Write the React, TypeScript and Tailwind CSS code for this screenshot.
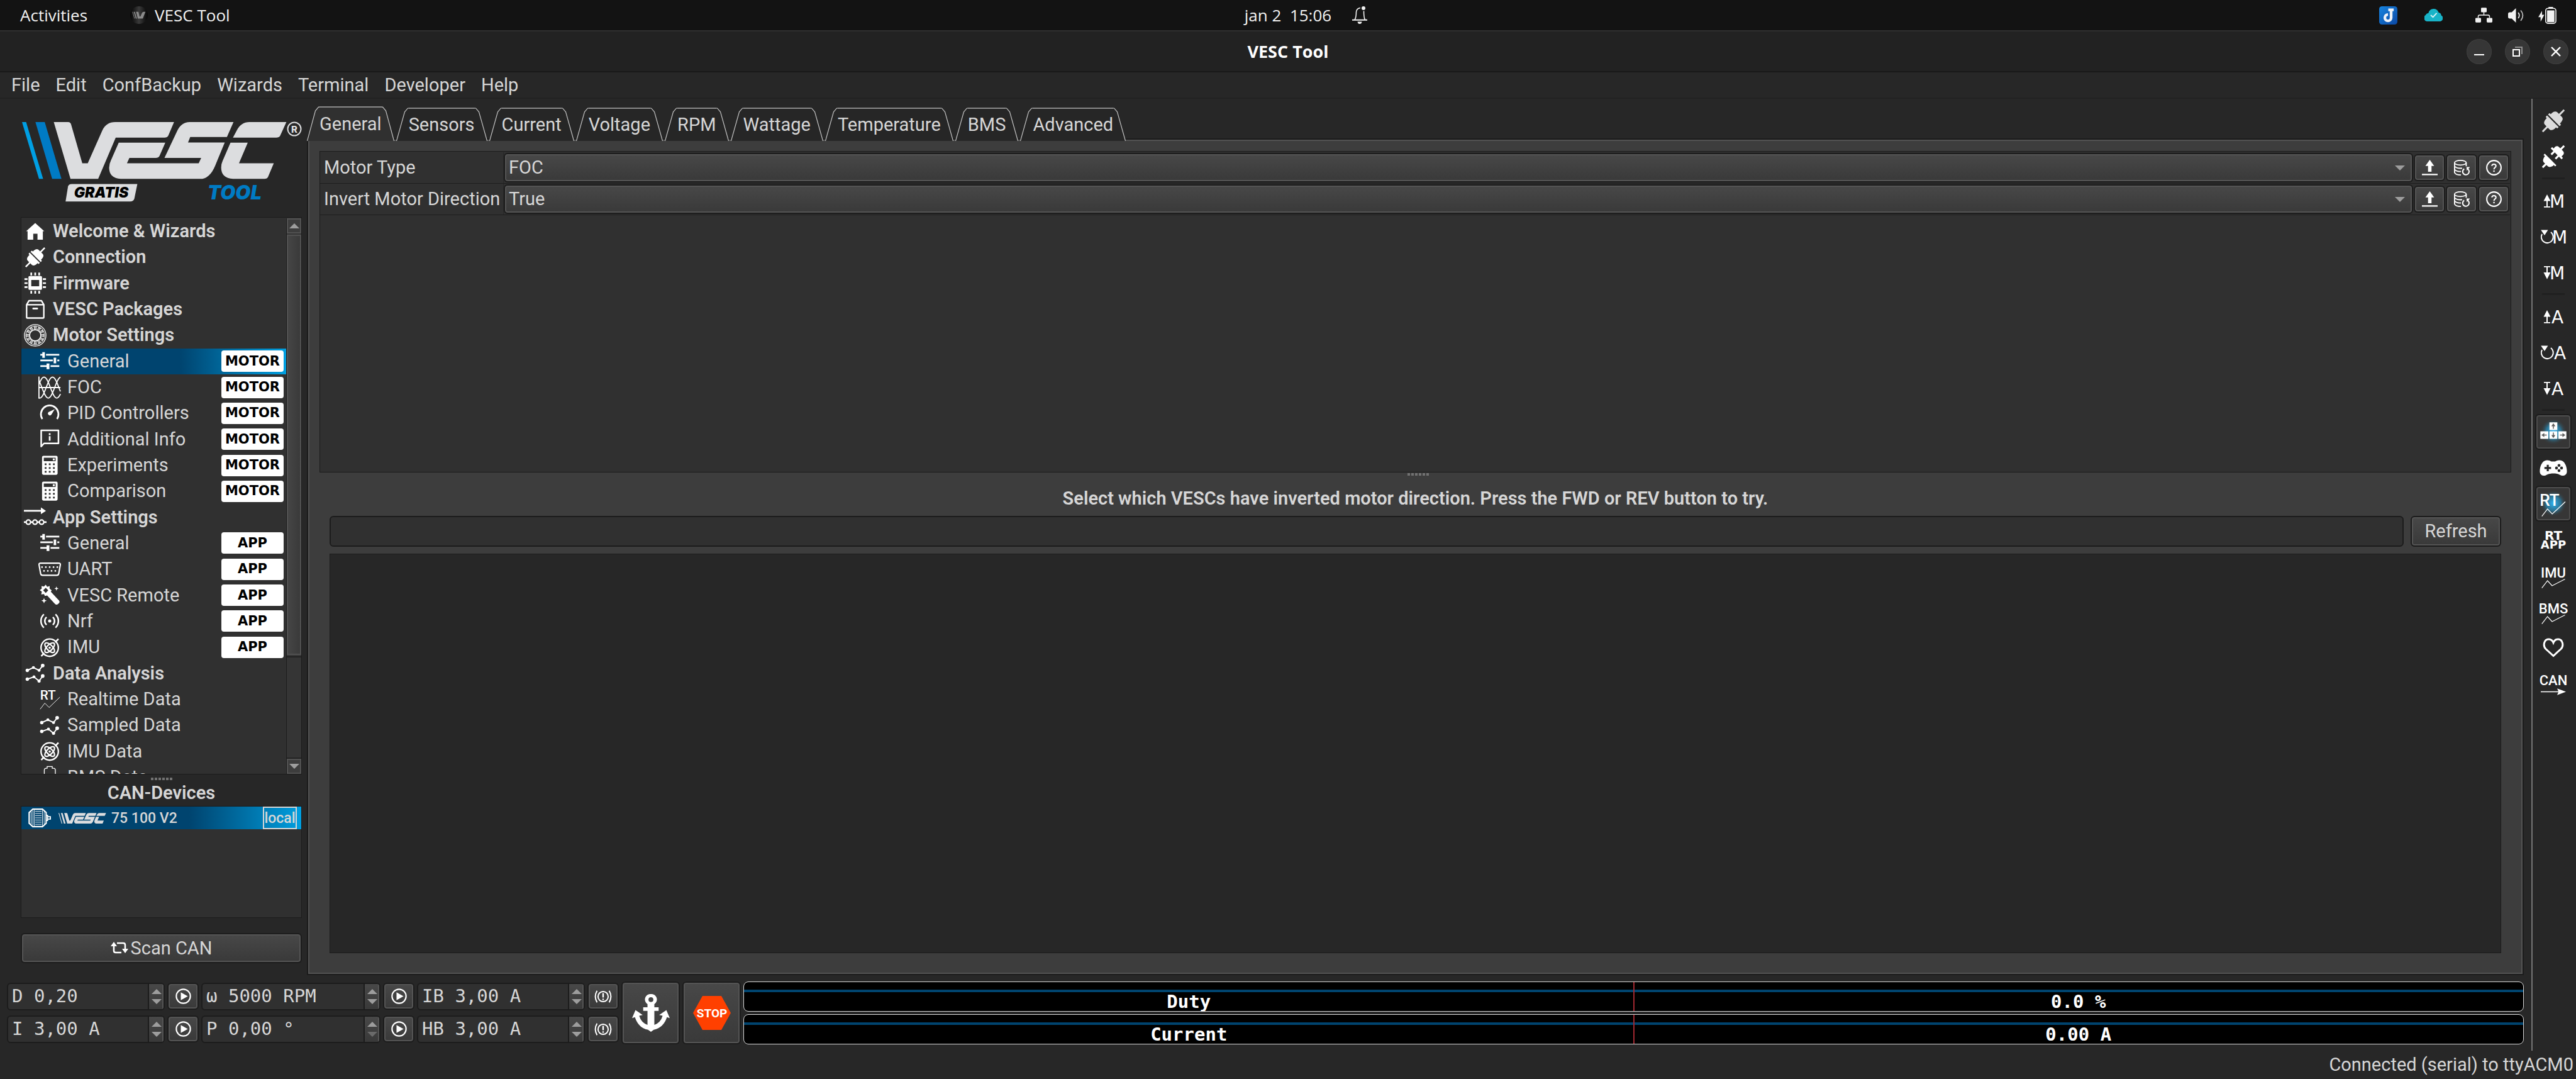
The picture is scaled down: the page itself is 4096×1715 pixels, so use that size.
import React from "react";

const WAVES = [0, 15, 30].map((phase) => {
  const points: string[] = [];
  for (let x = 1; x <= 39; x += 1) {
    const y = 20 - 18.5 * Math.cos(((x - 10 - phase) * 2 * Math.PI) / 45);
    points.push(`${x},${y.toFixed(1)}`);
  }
  return points.join(" ");
});

function Glyph({ children }: { children: React.ReactNode }) {
  return (
    <svg viewBox="0 0 40 40" className="size-9 shrink-0" fill="none" stroke="none" aria-hidden="true">
      {children}
    </svg>
  );
}

const HomeIcon = () => (
  <Glyph>
    <path fill="#fff" d="M20 5 36 19.5H33.5V34.5H24V24H16.5V34.5H6.5V19.5H4Z" />
  </Glyph>
);

const PlugShape = () => (
  <g transform="rotate(-45)">
    <path d="M1.2-14.5H4Q5-14.5 5-11.5H8Q15-11 15.5-6V-1.6H27V1.6H15.5V6Q15 11 8 11.5H5Q5 14.5 4 14.5H1.2Z" />
    <path d="M-1.2-14.5H-4Q-5-14.5-5-11.5H-8Q-15-11-15.5-6V-1.6H-27V1.6H-15.5V6Q-15 11-8 11.5H-5Q-5 14.5-4 14.5H-1.2Z" />
  </g>
);

const PlugIcon = () => (
  <Glyph>
    <g fill="#fff" transform="translate(20 20) scale(.88)">
      <PlugShape />
    </g>
  </Glyph>
);

const ChipIcon = () => (
  <Glyph>
    <path
      fill="#fff"
      fillRule="evenodd"
      d="M10 7.5H30Q32 7.5 32 9.5V30Q32 32 30 32H10Q8 32 8 30V9.5Q8 7.5 10 7.5ZM13 14.5V25.5H27V14.5Z"
    />
    <path
      fill="#fff"
      d="M11.5 1.5h3v5h-3zM18.5 1.5h3v5h-3zM25.5 1.5h3v5h-3zM11.5 33.5h3v5h-3zM18.5 33.5h3v5h-3zM25.5 33.5h3v5h-3zM1 11.5h5.5v3H1zM1 18.5h5.5v3H1zM1 25.5h5.5v3H1zM33.5 11.5H39v3h-5.500zM33.5 18.5H39v3h-5.500zM33.5 25.5H39v3h-5.500z"
    />
  </Glyph>
);

const PackageIcon = () => (
  <Glyph>
    <path
      stroke="#fff"
      strokeWidth="2.6"
      strokeLinejoin="round"
      d="M4.800 11.500 9 4.400H31L35.200 11.500V33.500Q35.200 35 33.500 35H6.500Q4.800 35 4.800 33.500ZM4.800 11.500H35.200"
    />
    <path stroke="#fff" strokeWidth="3" strokeLinecap="round" d="M16.500 18.300h7" />
  </Glyph>
);

const StatorIcon = () => (
  <Glyph>
    <g stroke="#fff">
      <circle cx="20" cy="20" r="19" strokeWidth="1.4" />
      <circle cx="20" cy="20" r="16.800" strokeWidth=".8" />
      <circle cx="20" cy="20" r="9.800" strokeWidth="1.600" />
      {[0, 30, 60, 90, 120, 150, 180, 210, 240, 270, 300, 330].map((a) => (
        <path key={a} strokeWidth="1" transform={`rotate(${a} 20 20)`} d="M18.300 10V4.500M20 10V4.500M21.700 10V4.500M17 4.500h6" />
      ))}
    </g>
  </Glyph>
);

const SlidersIcon = () => (
  <Glyph>
    <path
      fill="#fff"
      d="M3.500 7.200H7V4.300h4.500v10H7V10.300H3.500zM13.500 7.200H37v3.100H13.500zM3.500 17.200H25.500v3.100H3.500zM27 13.800h4.500v10H27zM33.500 17.200H37v3.100H33.500zM3.500 27.200h11v-3H19.500v10h-5v-4H3.500zM21.500 27.200H37v3.100H21.500z"
    />
  </Glyph>
);

const WaveIcon = () => (
  <Glyph>
    <g stroke="#fff" strokeWidth="2">
      <path d="M1 .5V39.500M1 20H39" />
      {WAVES.map((p) => (
        <polyline key={p} points={p} />
      ))}
    </g>
  </Glyph>
);

const GaugeIcon = () => (
  <Glyph>
    <path stroke="#fff" strokeWidth="3" d="M7 30A15.500 15.500 0 1 1 33 30" />
    <path fill="#fff" d="M29 12.500 22.800 22.600A3.300 3.300 0 1 1 18 17.800Z" />
  </Glyph>
);

const BubbleIcon = () => (
  <Glyph>
    <path stroke="#fff" strokeWidth="2.800" strokeLinejoin="round" d="M5 33V4.500H35.500V27.500H10Z" />
    <path fill="#fff" d="M18.500 9.500h3v3.200h-3zM18.500 14.800h3v8h-3z" />
  </Glyph>
);

const CalculatorIcon = () => (
  <Glyph>
    <path
      fill="#fff"
      fillRule="evenodd"
      d="M9 2.700H31.500Q34 2.700 34 5V34Q34 36.300 31.500 36.300H9Q6.500 36.300 6.500 34V5Q6.500 2.700 9 2.700ZM9.600 6V12.300H30.500V6ZM11.200 16.200v3h3.200v-3zM18.500 16.200v3h3.200v-3zM25.800 16.200v3H29v-3zM11.200 22.800v3h3.200v-3zM18.500 22.800v3h3.200v-3zM25.800 22.800v3H29v-3zM11.200 29.400v3h3.200v-3zM18.500 29.400v3h3.200v-3zM25.800 29.400v3H29v-3z"
    />
    <path fill="#fff" d="M25.500 7.500H29v3.300h-3.500z" />
  </Glyph>
);

const NodesIcon = () => (
  <Glyph>
    <path fill="#fff" d="M0 7.300H30V2.800L39 8.800 30 14.800V10.300H0zM0 27.300H4v3H0zM11.500 27.300h4v3h-4zM23.500 27.300h4v3h-4zM35 27.300h5v3h-5z" />
    <g stroke="#fff" strokeWidth="2.400">
      <circle cx="7.900" cy="28.800" r="3.900" />
      <circle cx="19.600" cy="28.800" r="3.900" />
      <circle cx="31.300" cy="28.800" r="3.900" />
    </g>
  </Glyph>
);

const SerialPortIcon = () => (
  <Glyph>
    <path
      stroke="#fff"
      strokeWidth="2.400"
      d="M4 9H36Q39.300 9 38.800 12L36 27.500Q35.400 30.500 32.500 30.500H7.500Q4.600 30.500 4 27.500L1.200 12Q.7 9 4 9Z"
    />
    <g fill="#fff">
      {[6.5, 13.2, 20, 26.8, 33.5].map((x) => (
        <circle key={x} cx={x} cy="16" r="1.500" />
      ))}
      {[10, 16.7, 23.3, 30].map((x) => (
        <circle key={x} cx={x} cy="22.700" r="1.500" />
      ))}
    </g>
  </Glyph>
);

const WandIcon = () => (
  <Glyph>
    <path
      fill="#fff"
      fillRule="evenodd"
      d="M13 1.500 15.500 5.200 20 3.800 19.800 8.300 23.500 11.500 22 14 36.500 29.500Q38.500 32 36 34.500L34 36Q31.500 37.500 29.500 35.500L15.500 20.500 11.500 21.500 10 18 5 18.500 6.200 14 2.500 11 6 8.300 5.500 4 10 4.800ZM13 7 8.500 11.500 13 16 17.500 11.500Z"
    />
    <path fill="#fff" d="m32 4.500 1 2.800 2.800 1-2.800 1-1 2.800-1-2.800-2.800-1 2.800-1zM10 25l1.300 3.400 3.400 1.300-3.400 1.300L10 34.500 8.700 31 5.300 29.700l3.400-1.300z" />
  </Glyph>
);

const RadioIcon = () => (
  <Glyph>
    <circle cx="20" cy="20" r="2.800" fill="#fff" />
    <g stroke="#fff" strokeWidth="2.800">
      <path d="M14.500 13.200A9 9 0 0 0 14.500 26.800M25.500 13.200A9 9 0 0 1 25.500 26.800M9.800 8.200A16 16 0 0 0 9.800 31.800M30.200 8.200A16 16 0 0 1 30.200 31.800" />
    </g>
  </Glyph>
);

const GyroIcon = () => (
  <Glyph>
    <g stroke="#fff">
      <circle cx="20" cy="20.500" r="15.300" strokeWidth="2.600" />
      <ellipse cx="20" cy="20.500" rx="11" ry="5" strokeWidth="2.400" transform="rotate(45 20 20.500)" />
      <ellipse cx="20" cy="20.500" rx="11" ry="5" strokeWidth="2.400" transform="rotate(-45 20 20.500)" />
      <path strokeWidth="2.800" d="M5 35.500 10.500 30M29.500 11 35.500 5" />
    </g>
    <circle cx="20" cy="20.500" r="2" fill="#fff" />
  </Glyph>
);

const SeriesIcon = () => (
  <Glyph>
    <g stroke="#fff" strokeWidth="2.200">
      <path d="M6 15 16.800 10 26.800 15 33.200 6.500M6 30.500 17.800 26.500 26.800 34 33.200 25" />
    </g>
    <g fill="#fff">
      <circle cx="6" cy="15" r="3" />
      <circle cx="16.800" cy="10" r="2.600" />
      <circle cx="26.800" cy="15" r="2.600" />
      <circle cx="33.200" cy="6.500" r="3.200" />
      <circle cx="6" cy="30.500" r="3" />
      <circle cx="17.800" cy="26.500" r="2.600" />
      <circle cx="26.800" cy="34" r="2.800" />
      <circle cx="33.200" cy="25" r="3.200" />
    </g>
  </Glyph>
);

const RealtimeIcon = () => (
  <Glyph>
    <text x="3" y="21" fill="#fff" fontSize="23" fontWeight="500" fontFamily="Roboto, sans-serif">
      RT
    </text>
    <path stroke="#fff" strokeWidth="1" d="M3.200 38 11.400 27.300 19 35 38 16.700" />
  </Glyph>
);

const BatteryIcon = () => (
  <Glyph>
    <path stroke="#fff" strokeWidth="1.500" d="M10.500 40V8Q10.500 4.500 13.500 4.500H15.500V1.500H24.500V4.500H27Q30 4.500 30 8V40" />
  </Glyph>
);

const MotorIcon = () => (
  <Glyph>
    <path stroke="#fff" strokeWidth="2.400" d="M8 4.500H25L31.500 10.500V29.500L25 35.500H8L1.500 29.500V10.500Z" />
    <path stroke="#fff" strokeWidth="1" d="M5 9V31M8 7V33M10.500 6V34M25 6V34M28 9V31M12 8.500H23.500M12 12.300H23.500M12 16.100H23.500M12 19.900H23.500M12 23.700H23.500M12 27.500H23.500M12 31.300H23.500" />
    <path stroke="#fff" strokeWidth="2" d="M32 15.500H34V24.500H32M34 18H39V22H34" />
  </Glyph>
);

function VescMark({ light, blue }: { light: string; blue: string }) {
  return (
    <>
      <path fill={light} d="M80 648H95L157 950H142Z" />
      <path fill={blue} d="M129 648H163L224 950H190Z" />
      <g fill="#dcdddf">
        <path d="M196 648H248Q258 648 260 665L300 867H320L374 690Q388 648 420 648H635L614 720Q610 731 600 731H422L358 950H257Z" />
        <path d="M433 758H603L582 828Q578 839 568 839H472L463 867H725L734 839H600L645 700Q660 648 692 648H852L828 728H694L686 757H820L785 880Q765 950 730 950H440Q398 945 398 890Q398 870 405 850Z" />
        <path d="M850 731 865 690Q880 648 910 648H1045L1022 722Q1018 731 1008 731Z" />
        <path d="M841 758H904L872 867H999L978 940Q975 950 965 950H850Q807 945 807 890Q807 870 812 855Z" />
      </g>
    </>
  );
}

function Logo() {
  return (
    <svg viewBox="0 0 446 132" className="ml-0.5 h-[132px] w-[446px] shrink-0" role="img" aria-label="VESC Tool Gratis">
      <g transform="scale(.4356 .2995) translate(-80 -645)">
        <VescMark light="#009fe3" blue="#007bc4" />
        <path fill="#dcdddf" d="M262 977H501L490 1055Q487 1070 475 1070H239L248 990Q250 977 262 977Z" />
      </g>
      <circle cx="433" cy="12" r="10.500" fill="none" stroke="#dcdddf" strokeWidth="2" />
      <text x="433" y="17.500" textAnchor="middle" fill="#dcdddf" fontSize="15" fontWeight="800" fontFamily="Inter, sans-serif">
        R
      </text>
      <text x="126" y="121" textAnchor="middle" fill="#000" fontSize="23" fontWeight="900" fontStyle="italic" fontFamily="Inter, sans-serif">
        GRATIS
      </text>
      <text x="338" y="124" textAnchor="middle" fill="#007bc4" fontSize="31" fontWeight="900" fontStyle="italic" fontFamily="Inter, sans-serif">
        TOOL
      </text>
    </svg>
  );
}

type TreeItem = { label: string; icon: React.ReactNode; sub?: boolean; badge?: string; active?: boolean };

const TREE: TreeItem[] = [
  { label: "Welcome & Wizards", icon: <HomeIcon /> },
  { label: "Connection", icon: <PlugIcon /> },
  { label: "Firmware", icon: <ChipIcon /> },
  { label: "VESC Packages", icon: <PackageIcon /> },
  { label: "Motor Settings", icon: <StatorIcon /> },
  { label: "General", icon: <SlidersIcon />, sub: true, badge: "MOTOR", active: true },
  { label: "FOC", icon: <WaveIcon />, sub: true, badge: "MOTOR" },
  { label: "PID Controllers", icon: <GaugeIcon />, sub: true, badge: "MOTOR" },
  { label: "Additional Info", icon: <BubbleIcon />, sub: true, badge: "MOTOR" },
  { label: "Experiments", icon: <CalculatorIcon />, sub: true, badge: "MOTOR" },
  { label: "Comparison", icon: <CalculatorIcon />, sub: true, badge: "MOTOR" },
  { label: "App Settings", icon: <NodesIcon /> },
  { label: "General", icon: <SlidersIcon />, sub: true, badge: "APP" },
  { label: "UART", icon: <SerialPortIcon />, sub: true, badge: "APP" },
  { label: "VESC Remote", icon: <WandIcon />, sub: true, badge: "APP" },
  { label: "Nrf", icon: <RadioIcon />, sub: true, badge: "APP" },
  { label: "IMU", icon: <GyroIcon />, sub: true, badge: "APP" },
  { label: "Data Analysis", icon: <SeriesIcon /> },
  { label: "Realtime Data", icon: <RealtimeIcon />, sub: true },
  { label: "Sampled Data", icon: <SeriesIcon />, sub: true },
  { label: "IMU Data", icon: <GyroIcon />, sub: true },
  { label: "BMS Data", icon: <BatteryIcon />, sub: true },
];

const raised =
  "border-2 border-[#1c1c1c] bg-linear-to-b from-[#484848] to-[#393939] shadow-[inset_0_0_0_2px_#545454]";

function Triangle({ up, dim }: { up?: boolean; dim?: boolean }) {
  return (
    <svg viewBox="0 0 16 8" className="h-2 w-4" aria-hidden="true">
      <path d={up ? "M8 0 16 8H0Z" : "M0 0H16L8 8Z"} fill={dim ? "#6a6a6a" : "#9d9d9d"} />
    </svg>
  );
}

function SplitDots() {
  return (
    <div className="flex h-3.5 items-center justify-center gap-0.5" aria-hidden="true">
      {[0, 1, 2, 3, 4, 5].map((i) => (
        <span key={i} className="size-1 bg-[#727272]" />
      ))}
    </div>
  );
}

function TreeRow({ item }: { item: TreeItem }) {
  const pad = item.sub ? "pl-[27px]" : "pl-1 font-semibold";
  const fill = item.active ? "bg-linear-to-r from-[#00446f] from-60% to-[#009fe0]" : "";
  return (
    <li className={`flex ${fill}`}>
      <button type="button" className={`flex min-w-0 flex-1 items-center gap-2.5 pr-1 text-left ${pad}`}>
        {item.icon}
        <span className="flex-1 whitespace-nowrap">{item.label}</span>
        {item.badge && (
          <span className="flex h-[34px] w-[99px] items-center justify-center rounded bg-white font-['DejaVu_Sans',sans-serif] text-[21px] leading-none font-bold text-black">
            {item.badge}
          </span>
        )}
      </button>
    </li>
  );
}

function Sidebar() {
  return (
    <aside className="flex w-[447px] shrink-0 flex-col pt-9 pb-[19px]">
      <Logo />
      <nav className="mt-5 flex min-h-0 flex-1 overflow-hidden border border-[#1c1c1c] bg-[#303030] pt-px">
        <ul className="grid h-[909px] flex-1 auto-rows-fr">
          {TREE.map((item, i) => (
            <TreeRow key={i} item={item} />
          ))}
        </ul>
        <div className="flex w-6 flex-col border-l border-[#1c1c1c] bg-[#353535]">
          <button type="button" aria-label="Scroll up" className="flex h-6 items-center justify-center border-2 border-[#515151] bg-[#3d3d3d]">
            <Triangle up />
          </button>
          <div className="my-0.5 grow-[674] border-2 border-[#515151] bg-linear-to-r from-[#454545] to-[#3a3a3a]" />
          <div className="grow-[162] border-t-2 border-b-2 border-[#222]" />
          <button type="button" aria-label="Scroll down" className="flex h-6 items-center justify-center border-2 border-[#515151] bg-[#3d3d3d]">
            <Triangle />
          </button>
        </div>
      </nav>
      <SplitDots />
      <h2 className="h-9 text-center leading-[30px] font-semibold">CAN-Devices</h2>
      <div className="h-[178px] border border-[#1c1c1c] bg-[#303030]">
        <div className="flex h-9 items-center bg-linear-to-r from-[#00446f] from-60% to-[#009fe0] pl-[11px] text-[23px] font-medium">
          <MotorIcon />
          <svg viewBox="80 645 970 305" preserveAspectRatio="none" className="ml-3 h-[17px] w-[76px]" role="img" aria-label="VESC">
            <VescMark light="#dcdddf" blue="#dcdddf" />
          </svg>
          <span className="ml-2 leading-none">75 100 V2</span>
          <span className="mr-[7px] ml-auto flex h-9 w-[54px] items-center justify-center border-2 border-[#d6d6d6] leading-none">local</span>
        </div>
      </div>
      <button type="button" className={`mt-6 flex h-12 items-center justify-center gap-1 rounded-md ${raised}`}>
        <svg viewBox="0 0 28 22" className="h-[22px] w-7" aria-hidden="true">
          <path fill="none" stroke="#fff" strokeWidth="2.600" d="M5 7V15Q5 18 8 18H17M10 3H20Q23 3 23 6V13" />
          <path fill="#fff" d="M5 1 10 8H0ZM23 19 18 12H28Z" />
        </svg>
        Scan CAN
      </button>
    </aside>
  );
}

const TABS = ["General", "Sensors", "Current", "Voltage", "RPM", "Wattage", "Temperature", "BMS", "Advanced"];

function TabEdge({ fill, flip }: { fill: string; flip?: boolean }) {
  return (
    <svg viewBox="0 0 20 54" preserveAspectRatio="none" className={`h-full w-5 ${flip ? "-scale-x-100" : ""}`} aria-hidden="true">
      <path d="M0 54 14 7 19 1H20V54Z" fill={fill} />
      <path d="M.5 54 13.500 7 18.500 1H20" fill="none" stroke="#c2c2c2" strokeWidth="1.200" />
    </svg>
  );
}

function Tabs() {
  return (
    <div role="tablist" className="relative z-10 -mb-1 flex items-end gap-[3px] pt-3">
      {TABS.map((t, i) => {
        const on = i === 0;
        const fill = on ? "#303030" : "#262626";
        return (
          <button key={t} type="button" role="tab" aria-selected={on} className={`flex ${on ? "h-[55px]" : "h-[53px]"}`}>
            <TabEdge fill={fill} />
            <span className={`flex h-full items-center border-t-2 border-[#8a8a8a] ${on ? "bg-[#303030]" : "bg-[#262626]"}`}>{t}</span>
            <TabEdge fill={fill} flip />
          </button>
        );
      })}
    </div>
  );
}

const UploadIcon = () => (
  <svg viewBox="0 0 27 27" className="size-[25px]" aria-hidden="true">
    <path fill="#fff" d="M13.500 0 21 10.500H16.500V20.500H10.500V10.500H6ZM0 24H27V26.500H0Z" />
  </svg>
);

const DatabaseIcon = () => (
  <svg viewBox="0 0 27 27" className="size-[25px]" fill="none" stroke="#fff" strokeWidth="2" aria-hidden="true">
    <ellipse cx="11" cy="5" rx="10" ry="4" />
    <path d="M1 5V22Q3 26 12 26M21 5V11M1 11Q4 15 14 14.500M1 16.500Q4 20.500 12 20" />
    <path strokeWidth="2.200" d="M17.500 15.500A5.500 5.500 0 1 0 24 16" />
    <path fill="#fff" stroke="none" d="M21.500 12.500H27.500L22 18.500Z" />
  </svg>
);

const HelpIcon = () => (
  <svg viewBox="0 0 27 27" className="size-[25px]" aria-hidden="true">
    <circle cx="13.500" cy="13.500" r="12.300" fill="none" stroke="#fff" strokeWidth="2.200" />
    <path fill="none" stroke="#fff" strokeWidth="2.200" d="M10 10.500Q10 7.500 13.500 7.500 17 7.500 17 10.500 17 12.200 15.200 13.300 13.600 14.300 13.600 16.500" />
    <circle cx="13.600" cy="19.500" r="1.400" fill="#fff" />
  </svg>
);

function ParamRow({ id, label, value }: { id: string; label: string; value: string }) {
  return (
    <div className="flex h-[50px] border-b border-[#1e1e1e]">
      <label htmlFor={id} className="flex w-[292px] items-center border-r border-[#272727] pl-1.5 whitespace-nowrap">
        {label}
      </label>
      <div className="relative flex flex-1 items-center">
        <select id={id} defaultValue={value} className={`h-[47px] w-full appearance-none rounded-md pl-1.5 ${raised}`}>
          <option>{value}</option>
        </select>
        <span className="pointer-events-none absolute right-[13px]">
          <Triangle />
        </span>
      </div>
      <div className="flex items-center gap-px pr-px pl-px">
        <button type="button" aria-label={`Read ${label}`} className={`flex h-[43px] w-[50px] items-center justify-center rounded-md ${raised}`}>
          <UploadIcon />
        </button>
        <button type="button" aria-label={`Default ${label}`} className={`flex h-[43px] w-[50px] items-center justify-center rounded-md ${raised}`}>
          <DatabaseIcon />
        </button>
        <button type="button" aria-label={`Help ${label}`} className={`flex h-[43px] w-[50px] items-center justify-center rounded-md ${raised}`}>
          <HelpIcon />
        </button>
      </div>
    </div>
  );
}

function MainPane() {
  return (
    <section className="flex min-w-0 flex-1 flex-col">
      <Tabs />
      <div className="flex flex-1 flex-col border-2 border-[#1c1c1c] bg-[#3d3d3d] px-[18px] pt-[18px] pb-[33px] shadow-[inset_0_0_0_2px_#525252]">
        <div className="h-[511px] border border-[#1c1c1c] bg-[#303030] pt-px pr-px">
          <ParamRow id="motor-type" label="Motor Type" value="FOC" />
          <ParamRow id="invert-direction" label="Invert Motor Direction" value="True" />
        </div>
        <div className="-mt-1 pl-2">
          <SplitDots />
        </div>
        <p className="mt-1.5 h-[53px] text-center leading-[50px] font-semibold">
          Select which VESCs have inverted motor direction. Press the FWD or REV button to try.
        </p>
        <div className="mx-4 flex h-[49px] gap-[11px]">
          <input aria-label="Progress" readOnly className="flex-1 rounded-md border-2 border-[#1c1c1c] bg-[#303030]" />
          <button type="button" className={`w-36 rounded-md ${raised}`}>
            Refresh
          </button>
        </div>
        <div className="mx-4 mt-[11px] flex-1 border border-[#1c1c1c] bg-[#272727]" />
      </div>
    </section>
  );
}

function Spin({ label, value, dimDown }: { label: string; value: string; dimDown?: boolean }) {
  return (
    <div className="flex h-11 w-full items-stretch overflow-hidden rounded-md border-2 border-[#1c1c1c] bg-[#303030]">
      <input
        aria-label={label}
        defaultValue={value}
        className="min-w-0 flex-1 bg-transparent pb-0.5 pl-1.5 font-['DejaVu_Sans_Mono',monospace] text-[29px] leading-none"
      />
      <div className="flex w-[25px] flex-col border-l-2 border-[#1c1c1c] bg-linear-to-b from-[#484848] to-[#393939] shadow-[inset_-2px_0_0_0_#545454]">
        <button type="button" aria-label={`${label} up`} className="flex flex-1 items-center justify-center pt-1">
          <Triangle up />
        </button>
        <button type="button" aria-label={`${label} down`} className="flex flex-1 items-center justify-center pb-1">
          <Triangle dim={dimDown} />
        </button>
      </div>
    </div>
  );
}

function SquareButton({ label, children }: { label: string; children: React.ReactNode }) {
  return (
    <button type="button" aria-label={label} className={`flex h-[43px] w-[50px] shrink-0 items-center justify-center self-start rounded-md ${raised}`}>
      {children}
    </button>
  );
}

const PlayIcon = () => (
  <svg viewBox="0 0 28 28" className="size-[25px]" aria-hidden="true">
    <circle cx="14" cy="14" r="12.500" fill="none" stroke="#fff" strokeWidth="2.400" />
    <path fill="#fff" d="M9.500 7 22 14 9.500 21Z" />
  </svg>
);

const BrakeIcon = () => (
  <svg viewBox="0 0 30 24" className="h-[22px] w-7" fill="none" stroke="#fff" strokeWidth="2.200" aria-hidden="true">
    <circle cx="15" cy="12" r="8.800" />
    <path d="M4.500 2Q-1.500 12 4.500 22M25.500 2Q31.500 12 25.500 22" />
    <path strokeWidth="2.600" d="M15 6V13.500M15 15.500V18" />
  </svg>
);

const BIG_BUTTON = "flex h-[100px] w-[93px] shrink-0 items-center justify-center rounded-md";

function Gauge({ name, value }: { name: string; value: string }) {
  return (
    <div className="relative flex min-h-0 flex-col overflow-hidden rounded-lg border border-[#d6d6d6] bg-black pt-3 font-['DejaVu_Sans_Mono',monospace] font-bold text-white">
      <div className="h-1 shrink-0 bg-[#00446f]" />
      <div className="grid min-h-0 flex-1 grid-cols-2 items-center text-center leading-none">
        <span>{name}</span>
        <span>{value}</span>
      </div>
      <div className="absolute inset-y-0 left-1/2 w-0.5 -translate-x-1/2 bg-[#a02830]" />
    </div>
  );
}

function Controls() {
  return (
    <footer className="mt-2.5 mb-2.5 flex h-[100px] gap-1 pr-3 pl-[11px]">
      <div className="grid shrink-0 grid-cols-[251px_50px_285px_50px_267px_50px] grid-rows-2 items-center gap-x-1 gap-y-2 py-0.5">
        <Spin label="Duty" value="D 0,20" />
        <SquareButton label="Run duty">
          <PlayIcon />
        </SquareButton>
        <Spin label="Speed" value="ω 5000 RPM" />
        <SquareButton label="Run speed">
          <PlayIcon />
        </SquareButton>
        <Spin label="Brake current" value="IB 3,00 A" />
        <SquareButton label="Brake">
          <BrakeIcon />
        </SquareButton>
        <Spin label="Current" value="I 3,00 A" />
        <SquareButton label="Run current">
          <PlayIcon />
        </SquareButton>
        <Spin label="Position" value="P 0,00 °" dimDown />
        <SquareButton label="Run position">
          <PlayIcon />
        </SquareButton>
        <Spin label="Handbrake current" value="HB 3,00 A" />
        <SquareButton label="Handbrake">
          <BrakeIcon />
        </SquareButton>
      </div>
      <button type="button" aria-label="Release motor" className={`${BIG_BUTTON} ${raised}`}>
        <svg viewBox="0 0 66 66" className="size-[60px]" aria-hidden="true">
          <path
            fill="#fff"
            fillRule="evenodd"
            d="M33 0A9.500 9.500 0 0 1 39 17.500V23H46.500V29.500H39V54Q50 50 53.500 38L47.500 36.500 60 28 66 42 61 40.500Q55 59 38 62.500L33 66 28 62.500Q11 59 5 40.500L0 42 6 28 18.500 36.500 12.500 38Q16 50 27 54V29.500H19.500V23H27V17.500A9.500 9.500 0 0 1 33 0ZM33 5.500A4 4 0 1 0 33 14 4 4 0 1 0 33 5.500Z"
          />
        </svg>
      </button>
      <button type="button" className={`${BIG_BUTTON} ${raised}`}>
        <svg viewBox="0 0 60 54" className="h-[54px] w-[60px]" role="img" aria-label="Stop">
          <path fill="#ff4000" d="M15 0H45L60 27 45 54H15L0 27Z" />
          <text x="30" y="34" textAnchor="middle" fill="#fff" fontSize="19" fontWeight="700" fontFamily="Roboto, sans-serif">
            STOP
          </text>
        </svg>
      </button>
      <div className="grid min-w-0 flex-1 grid-rows-2 gap-1">
        <Gauge name="Duty" value="0.0 %" />
        <Gauge name="Current" value="0.00 A" />
      </div>
    </footer>
  );
}

function ToolIcon({ children }: { children: React.ReactNode }) {
  return (
    <svg viewBox="0 0 48 48" className="size-12" fill="none" aria-hidden="true">
      {children}
    </svg>
  );
}

function Letter({ x, children }: { x: number; children: string }) {
  return (
    <text x={x} y="34.500" fill="#fff" fontSize="28" fontFamily="'DejaVu Sans', sans-serif">
      {children}
    </text>
  );
}

function UpIcon({ letter }: { letter: string }) {
  return (
    <ToolIcon>
      <path fill="#fff" d="M14 14 19.500 24.500H15V33H19V34.800H9V33H13V24.500H8.500Z" />
      <Letter x={letter === "M" ? 18 : 21}>{letter}</Letter>
    </ToolIcon>
  );
}

function DownIcon({ letter }: { letter: string }) {
  return (
    <ToolIcon>
      <path fill="#fff" d="M14 34.800 19.500 24H15V15.800H19V14H9V15.800H13V24H8.500Z" />
      <Letter x={letter === "M" ? 18 : 21}>{letter}</Letter>
    </ToolIcon>
  );
}

function CycleIcon({ letter }: { letter: string }) {
  return (
    <ToolIcon>
      <path stroke="#fff" strokeWidth="2" d="M20 17A9.500 9.500 0 1 1 6 20" />
      <path fill="#fff" d="M4.200 13.400H15.500L10 22Z" />
      <Letter x={letter === "M" ? 22 : 25}>{letter}</Letter>
    </ToolIcon>
  );
}

function Glow() {
  return (
    <>
      <defs>
        <radialGradient id="glow">
          <stop offset="0" stopColor="#2fb4f5" />
          <stop offset=".55" stopColor="#2a83ab" stopOpacity=".8" />
          <stop offset="1" stopColor="#383838" stopOpacity="0" />
        </radialGradient>
      </defs>
      <circle cx="24" cy="23" r="21" fill="url(#glow)" />
    </>
  );
}

function ChartText({ text, line }: { text: string; line: string }) {
  return (
    <>
      <text
        x={text === "RT" ? 18 : 24}
        y="27"
        textAnchor="middle"
        fill="#fff"
        fontSize={text === "RT" ? 26 : 22}
        fontWeight="500"
        fontFamily="Roboto, sans-serif"
      >
        {text}
      </text>
      <path stroke="#fff" strokeWidth="1.200" d={line} />
    </>
  );
}

type Tool = { label: string; icon: React.ReactNode; on?: boolean };

const TOOL_GROUPS: Tool[][] = [
  [
    {
      label: "Connect",
      icon: (
        <ToolIcon>
          <g fill="#dcdcdc" transform="translate(24 24) scale(.9)">
            <PlugShape />
          </g>
        </ToolIcon>
      ),
    },
    {
      label: "Disconnect",
      icon: (
        <ToolIcon>
          <g fill="#fff" transform="translate(24 24) scale(.9) rotate(-45)">
            <path d="M0-7H7V-13.500H10.500V-10H15Q19-9 19-5V-1.700H27V1.700H19V5Q19 9 15 10H10.500V13.500H7V7H0V3.500H7V-3.500H0Z" />
            <path d="M-7-14.500H-10V-11H-12Q-19-9-19-5V-1.700H-27V1.700H-19V5Q-19 9-12 11H-10V14.500H-7Z" />
          </g>
        </ToolIcon>
      ),
    },
  ],
  [
    { label: "Read motor configuration", icon: <UpIcon letter="M" /> },
    { label: "Read default motor configuration", icon: <CycleIcon letter="M" /> },
    { label: "Write motor configuration", icon: <DownIcon letter="M" /> },
  ],
  [
    { label: "Read app configuration", icon: <UpIcon letter="A" /> },
    { label: "Read default app configuration", icon: <CycleIcon letter="A" /> },
    { label: "Write app configuration", icon: <DownIcon letter="A" /> },
  ],
  [
    {
      label: "Keyboard control",
      on: true,
      icon: (
        <ToolIcon>
          <Glow />
          <path fill="#fff" d="M17.700 8.300H30.300V20.500H17.700zM3.300 22.400H16V34.600H3.300zM17.700 22.400H30.300V34.600H17.700zM32 22.400H44.700V34.600H32z" />
          <path
            stroke="#5c5c5c"
            strokeWidth="1.500"
            d="M24 18.500V12M13.500 28.500H8M24 24.500V31M34.500 28.500H40"
          />
          <path fill="#5c5c5c" d="M24 9.800 27.200 14.500H20.800zM5 28.500 9.500 25.300V31.700zM24 33.200 20.800 28.500H27.200zM43 28.500 38.500 25.300V31.700z" />
        </ToolIcon>
      ),
    },
    {
      label: "Gamepad control",
      icon: (
        <ToolIcon>
          <path
            fill="#fff"
            fillRule="evenodd"
            d="M14 11.500Q18 11.500 21 13.500H27Q30 11.500 34 11.500C42 11.500 46 22 45.500 30 45 35.500 40 37 36 35.500 31 32.500 27 32.500 24 32.500 21 32.500 17 32.500 12 35.500 8 37 3 35.500 2.500 30 2 22 6 11.500 14 11.500ZM13.500 18.800V22.300H9.800V25.500H13.500V29H16.700V25.500H20.400V22.300H16.700V18.800Z"
          />
          <g fill="#272727">
            <circle cx="33" cy="19.800" r="2.300" />
            <circle cx="33" cy="28" r="2.300" />
            <circle cx="29" cy="23.900" r="2.300" />
            <circle cx="37" cy="23.900" r="2.300" />
          </g>
        </ToolIcon>
      ),
    },
    {
      label: "Stream realtime data",
      on: true,
      icon: (
        <ToolIcon>
          <Glow />
          <ChartText text="RT" line="M5.700 43.600 14.700 32 22.200 40 43 20.500" />
        </ToolIcon>
      ),
    },
    {
      label: "Stream app data",
      icon: (
        <ToolIcon>
          <g fill="#fff" fontWeight="700" textAnchor="middle" fontFamily="'DejaVu Sans', sans-serif">
            <text x="24" y="23.500" fontSize="20">
              RT
            </text>
            <text x="24" y="37.500" fontSize="18">
              APP
            </text>
          </g>
        </ToolIcon>
      ),
    },
    {
      label: "Stream IMU data",
      icon: (
        <ToolIcon>
          <ChartText text="IMU" line="M5.700 43.600 14.700 32 22 40 42.500 29.500" />
        </ToolIcon>
      ),
    },
    {
      label: "Stream BMS data",
      icon: (
        <ToolIcon>
          <ChartText text="BMS" line="M5.700 43.600 14.700 32 22 40 42.500 29.500" />
        </ToolIcon>
      ),
    },
    {
      label: "Send alive",
      icon: (
        <ToolIcon>
          <path
            stroke="#fff"
            strokeWidth="3"
            d="M24 37.500 12 26.500C7 21.500 9 11 16.500 11 20.500 11 22.800 13.500 24 16.500 25.200 13.500 27.500 11 31.500 11 39 11 41 21.500 36 26.500Z"
          />
        </ToolIcon>
      ),
    },
    {
      label: "CAN forwarding",
      icon: (
        <ToolIcon>
          <text x="24" y="27" textAnchor="middle" fill="#fff" fontSize="22" fontWeight="500" fontFamily="Roboto, sans-serif">
            CAN
          </text>
          <path fill="#fff" d="M4 36.700H32L30 32.300 44 37.500 30 42.700 32 38.300H4Z" />
        </ToolIcon>
      ),
    },
  ],
];

function Toolbar() {
  return (
    <div role="toolbar" aria-orientation="vertical" className="flex w-[71px] shrink-0 flex-col items-center border-l-2 border-[#757575] pt-1.5 pr-[3px]">
      {TOOL_GROUPS.map((group, g) => (
        <React.Fragment key={g}>
          {g > 0 && <hr className="my-[5px] h-[3px] w-9 border-0 bg-[#202020]" />}
          {group.map((tool) => (
            <button
              key={tool.label}
              type="button"
              aria-label={tool.label}
              aria-pressed={tool.on}
              className={`flex h-[57px] w-[58px] items-center justify-center rounded-md ${
                tool.on ? "border-2 border-[#1c1c1c] bg-[#363636] shadow-[inset_0_0_0_2px_#4d4d4d]" : ""
              }`}
            >
              {tool.icon}
            </button>
          ))}
        </React.Fragment>
      ))}
    </div>
  );
}

function SystemBar() {
  return (
    <header className="grid h-[50px] grid-cols-3 items-center border-b-2 border-[#2f2f2f] bg-[#131313] font-['Open_Sans',sans-serif] text-[26px] text-[#f2f2f2]">
      <div className="flex items-center pl-8">
        <span>Activities</span>
        <svg viewBox="0 0 30 30" className="ml-[68px] size-[28px]" aria-hidden="true">
          <defs>
            <linearGradient id="app-disc">
              <stop offset="0" stopColor="#050505" />
              <stop offset=".5" stopColor="#3a3a3a" />
              <stop offset="1" stopColor="#050505" />
            </linearGradient>
          </defs>
          <circle cx="15" cy="15" r="15" fill="url(#app-disc)" />
          <path fill="#8a8a8a" d="M3.500 9.500h1L8 21H7zM6 9.500h2L11.500 21h-2zM10 9.500H14L16 17.500H17.500L20 11.500Q21 9.500 23 9.500H26L21.500 21H13Z" />
        </svg>
        <span className="ml-[11px]">VESC Tool</span>
      </div>
      <div className="relative flex items-center justify-center">
        <span className="whitespace-pre">jan 2  15:06</span>
        <svg viewBox="0 0 24 28" className="absolute left-1/2 ml-[102px] h-7 w-6" fill="none" aria-hidden="true">
          <path stroke="#f2f2f2" strokeWidth="1.600" d="M4 21.500Q6.500 18 6.500 9 7 3.500 13 2.500M18.500 7.500Q18.500 18 20.500 21.500" />
          <path fill="#f2f2f2" d="M0 20.800H24V22.800H0zM8.500 24.500H15.500Q15 28 12 28 9 28 8.500 24.500Z" />
          <circle cx="18" cy="3" r="3" fill="#f2f2f2" />
        </svg>
      </div>
      <div className="flex items-center justify-end pr-[31px]">
        <svg viewBox="0 0 32 32" className="size-[29px]" aria-hidden="true">
          <defs>
            <linearGradient id="notes" x1="0" y1="0" x2="1" y2="1">
              <stop offset="0" stopColor="#1785e0" />
              <stop offset="1" stopColor="#0b47a3" />
            </linearGradient>
          </defs>
          <rect width="32" height="32" rx="5" fill="url(#notes)" />
          <path fill="none" stroke="#eef2f8" strokeWidth="4.800" d="M16 6.200H25.500M21 5V20A5.500 5.500 0 1 1 15.500 14.500" />
        </svg>
        <svg viewBox="0 0 32 22" className="ml-[43px] h-5 w-[29px]" aria-hidden="true">
          <path fill="#18b3c7" d="M6 22A6 6 0 0 1 2 11Q3.500 8 7 7.500 9 0 16 0 22.500 0 25 6.500 29 7 29.500 11.500A5.600 5.600 0 0 1 27 22Z" />
          <path fill="none" stroke="#d6f3f6" strokeWidth="2" d="M11 11 15 14.500 21.500 7.500" />
        </svg>
        <svg viewBox="0 0 30 26" className="ml-[52px] h-6 w-[27px]" aria-hidden="true">
          <path fill="none" stroke="#f2f2f2" strokeWidth="1.600" d="M15 7V13M5 18V15.500Q5 13 7.500 13H22.500Q25 13 25 15.500V18" />
          <path fill="#f2f2f2" d="M11.500 0H18.500Q20 0 20 1.500V6.500Q20 8 18.500 8H11.500Q10 8 10 6.500V1.500Q10 0 11.500 0ZM1.500 18H8.500Q10 18 10 19.500V24.500Q10 26 8.500 26H1.500Q0 26 0 24.500V19.500Q0 18 1.500 18ZM21.500 18H28.500Q30 18 30 19.500V24.500Q30 26 28.500 26H21.500Q20 26 20 24.500V19.500Q20 18 21.500 18Z" />
        </svg>
        <svg viewBox="0 0 28 28" className="ml-[25px] size-[25px]" aria-hidden="true">
          <path fill="#f2f2f2" d="M3 8.500H6.500L14 1V27L6.500 19.500H3Q0 19.500 0 16.500V11.500Q0 8.500 3 8.500Z" />
          <path fill="none" stroke="#f2f2f2" strokeWidth="1.900" d="M18 9Q22 14 18 19" />
          <path fill="none" stroke="#bdbdbd" strokeWidth="1.900" d="M22.500 5Q30 14 22.500 23.500" />
        </svg>
        <svg viewBox="0 0 32 30" className="ml-[23px] h-[27px] w-[29px]" aria-hidden="true">
          <path fill="#f2f2f2" d="M6.500 7V14H10.500L4 26V18H0ZM18 0H26V3H18ZM15.500 6H28.500V27H15.500Z" />
          <rect x="13" y="2.500" width="18" height="26.500" rx="4" fill="none" stroke="#f2f2f2" strokeWidth="1.800" />
        </svg>
      </div>
    </header>
  );
}

function TitleBar() {
  return (
    <div className="grid h-[65px] grid-cols-3 items-center border-b-2 border-[#181818] bg-[#222] px-3 font-['Open_Sans',sans-serif] text-[27px] text-white">
      <h1 className="col-start-2 text-center font-bold">VESC Tool</h1>
      <div className="flex justify-end gap-[21px]">
        <button type="button" aria-label="Minimize" className="flex size-10 items-center justify-center rounded-full bg-[#363636] shadow-[inset_0_0_0_1px_#3e3e3e]">
          <svg viewBox="0 0 16 16" className="size-4" aria-hidden="true">
            <path fill="#fff" d="M0 12H16V14H0z" />
          </svg>
        </button>
        <button type="button" aria-label="Restore" className="flex size-10 items-center justify-center rounded-full bg-[#363636] shadow-[inset_0_0_0_1px_#3e3e3e]">
          <svg viewBox="0 0 16 16" className="size-4" fill="none" strokeWidth="2" aria-hidden="true">
            <path stroke="#fff" d="M1 5H11V15H1Z" />
            <path stroke="#8f8f8f" d="M4 1H15V12" />
          </svg>
        </button>
        <button type="button" aria-label="Close" className="flex size-10 items-center justify-center rounded-full bg-[#363636] shadow-[inset_0_0_0_1px_#3e3e3e]">
          <svg viewBox="0 0 16 16" className="size-4" fill="none" stroke="#fff" strokeWidth="2.400" aria-hidden="true">
            <path d="M1 1 15 15M15 1 1 15" />
          </svg>
        </button>
      </div>
    </div>
  );
}

const MENU = ["File", "Edit", "ConfBackup", "Wizards", "Terminal", "Developer", "Help"];

export default function App() {
  return (
    <div className="flex h-screen flex-col overflow-hidden bg-[#272727] font-['Roboto',sans-serif] text-[29px] leading-none text-[#d6d6d6]">
      <SystemBar />
      <TitleBar />
      <nav className="flex h-[42px] items-center gap-[25px] border-b-2 border-[#222] pl-[18px]">
        {MENU.map((m) => (
          <button key={m} type="button">
            {m}
          </button>
        ))}
      </nav>
      <div className="flex min-h-0 flex-1">
        <main className="flex min-w-0 flex-1 flex-col">
          <div className="flex min-h-0 flex-1 gap-2 pr-3 pl-[33px]">
            <Sidebar />
            <MainPane />
          </div>
          <Controls />
        </main>
        <Toolbar />
      </div>
      <div role="status" className="flex h-[45px] items-center justify-end pr-1">
        Connected (serial) to ttyACM0
      </div>
    </div>
  );
}
